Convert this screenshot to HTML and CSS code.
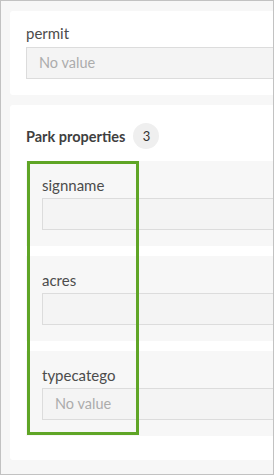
FILE: index.html
```html
<!DOCTYPE html>
<html lang="en">
<head>
  <meta charset="UTF-8" />
  <meta name="viewport" content="width=device-width, initial-scale=1.0" />
  <title>Park form</title>
  <link rel="stylesheet" href="styles.css">
</head>
<body>
  <div class="panel">

    <div class="card">
      <div class="field">
        <div class="field-label">permit</div>
        <div class="field-input empty">No value</div>
      </div>
    </div>

    <div class="card card-group">
      <div class="group-head">
        <span class="group-title">Park properties</span>
        <span class="count">3</span>
      </div>

      <div class="group-list">
        <div class="group-item">
          <div class="field-label">signname</div>
          <div class="field-input"></div>
        </div>
        <div class="group-item">
          <div class="field-label">acres</div>
          <div class="field-input"></div>
        </div>
        <div class="group-item">
          <div class="field-label">typecatego</div>
          <div class="field-input empty">No value</div>
        </div>
        <div class="highlight"></div>
      </div>
    </div>

  </div>
</body>
</html>
```

FILE: styles.css
```css
* {
  box-sizing: border-box;
  margin: 0;
  padding: 0;
}
html, body {
  height: 100%;
  font-family: Lato, "Open Sans", Arial, sans-serif;
  color: #4a4a4a;
  background: #fff;
}

.panel {
  height: 475px;
  border: 1px solid #c2c2c2;
  background: #f7f7f7;
  padding: 10px 0 0 9px;
}

.card {
  background: #fff;
  border-radius: 3px 0 0 3px;
  padding: 12px 0 16px 16px;
  margin-bottom: 10px;
}
.card-group {
  padding: 18px 0 24px 16px;
}

.field-label {
  font-size: 15px;
  line-height: 20px;
  margin-bottom: 4px;
  color: #4c4c4c;
}
.field-input {
  height: 32px;
  background: #f4f4f4;
  border: 1px solid #dcdcdc;
  border-right: none;
  padding-left: 12px;
  font-size: 14.5px;
  line-height: 30px;
}
.field-input.empty {
  color: #acacac;
}

.group-head {
  display: flex;
  align-items: center;
  height: 26px;
  margin-bottom: 12px;
}
.group-title {
  font-size: 14.5px;
  font-weight: bold;
  color: #3f3f3f;
  margin-right: 8px;
}
.count {
  width: 26px;
  height: 26px;
  border-radius: 50%;
  background: #efefef;
  font-size: 13px;
  line-height: 26px;
  text-align: center;
  color: #333;
}

.group-list {
  position: relative;
  display: flex;
  flex-direction: column;
  gap: 10px;
}
.group-item {
  background: #f7f7f7;
  padding: 14px 0 16px 16px;
  height: 85px;
}
.group-item .field-label {
  margin-bottom: 3px;
}

.highlight {
  position: absolute;
  left: 1px;
  top: 0;
  width: 112px;
  height: 274px;
  border: 3px solid #5fa526;
}
```
